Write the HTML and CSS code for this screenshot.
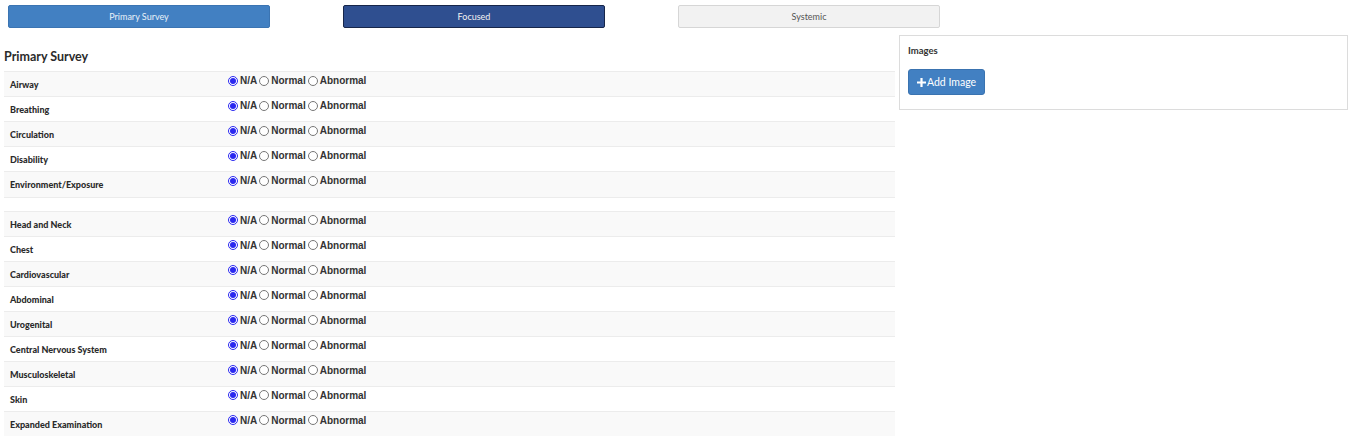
FILE: index.html
```html
<!DOCTYPE html>
<html>
  <head>
    <meta charset="utf-8">
    <title>Examination</title>
    <link rel="stylesheet" href="styles.css">
  </head>
  <body>
    <!-- exam type tabs -->
    <nav class="exam-tabs">
      <button class="tab tab-primary">Primary Survey</button>
      <button class="tab tab-focused">Focused</button>
      <button class="tab tab-systemic">Systemic</button>
    </nav>

    <div class="exam-layout">
      <main class="exam-main">
        <h2 class="section-title">Primary Survey</h2>

        <table class="exam-table">
          <tbody>
            <tr>
              <th>Airway</th>
              <td><div class="radio-group">
                <label><input type="radio" name="airway" checked>N/A</label>
                <label><input type="radio" name="airway">Normal</label>
                <label><input type="radio" name="airway">Abnormal</label>
              </div></td>
            </tr>
            <tr>
              <th>Breathing</th>
              <td><div class="radio-group">
                <label><input type="radio" name="breathing" checked>N/A</label>
                <label><input type="radio" name="breathing">Normal</label>
                <label><input type="radio" name="breathing">Abnormal</label>
              </div></td>
            </tr>
            <tr>
              <th>Circulation</th>
              <td><div class="radio-group">
                <label><input type="radio" name="circulation" checked>N/A</label>
                <label><input type="radio" name="circulation">Normal</label>
                <label><input type="radio" name="circulation">Abnormal</label>
              </div></td>
            </tr>
            <tr>
              <th>Disability</th>
              <td><div class="radio-group">
                <label><input type="radio" name="disability" checked>N/A</label>
                <label><input type="radio" name="disability">Normal</label>
                <label><input type="radio" name="disability">Abnormal</label>
              </div></td>
            </tr>
            <tr>
              <th>Environment/Exposure</th>
              <td><div class="radio-group">
                <label><input type="radio" name="environment" checked>N/A</label>
                <label><input type="radio" name="environment">Normal</label>
                <label><input type="radio" name="environment">Abnormal</label>
              </div></td>
            </tr>
          </tbody>
        </table>

        <div class="table-spacer"></div>

        <table class="exam-table">
          <tbody>
            <tr>
              <th>Head and Neck</th>
              <td><div class="radio-group">
                <label><input type="radio" name="head" checked>N/A</label>
                <label><input type="radio" name="head">Normal</label>
                <label><input type="radio" name="head">Abnormal</label>
              </div></td>
            </tr>
            <tr>
              <th>Chest</th>
              <td><div class="radio-group">
                <label><input type="radio" name="chest" checked>N/A</label>
                <label><input type="radio" name="chest">Normal</label>
                <label><input type="radio" name="chest">Abnormal</label>
              </div></td>
            </tr>
            <tr>
              <th>Cardiovascular</th>
              <td><div class="radio-group">
                <label><input type="radio" name="cardio" checked>N/A</label>
                <label><input type="radio" name="cardio">Normal</label>
                <label><input type="radio" name="cardio">Abnormal</label>
              </div></td>
            </tr>
            <tr>
              <th>Abdominal</th>
              <td><div class="radio-group">
                <label><input type="radio" name="abdominal" checked>N/A</label>
                <label><input type="radio" name="abdominal">Normal</label>
                <label><input type="radio" name="abdominal">Abnormal</label>
              </div></td>
            </tr>
            <tr>
              <th>Urogenital</th>
              <td><div class="radio-group">
                <label><input type="radio" name="urogenital" checked>N/A</label>
                <label><input type="radio" name="urogenital">Normal</label>
                <label><input type="radio" name="urogenital">Abnormal</label>
              </div></td>
            </tr>
            <tr>
              <th>Central Nervous System</th>
              <td><div class="radio-group">
                <label><input type="radio" name="cns" checked>N/A</label>
                <label><input type="radio" name="cns">Normal</label>
                <label><input type="radio" name="cns">Abnormal</label>
              </div></td>
            </tr>
            <tr>
              <th>Musculoskeletal</th>
              <td><div class="radio-group">
                <label><input type="radio" name="musculo" checked>N/A</label>
                <label><input type="radio" name="musculo">Normal</label>
                <label><input type="radio" name="musculo">Abnormal</label>
              </div></td>
            </tr>
            <tr>
              <th>Skin</th>
              <td><div class="radio-group">
                <label><input type="radio" name="skin" checked>N/A</label>
                <label><input type="radio" name="skin">Normal</label>
                <label><input type="radio" name="skin">Abnormal</label>
              </div></td>
            </tr>
            <tr>
              <th>Expanded Examination</th>
              <td><div class="radio-group">
                <label><input type="radio" name="expanded" checked>N/A</label>
                <label><input type="radio" name="expanded">Normal</label>
                <label><input type="radio" name="expanded">Abnormal</label>
              </div></td>
            </tr>
          </tbody>
        </table>
      </main>

      <!-- images panel -->
      <aside class="images-panel">
        <h3>Images</h3>
        <button class="add-image">
          <svg class="plus-icon" width="9" height="9" viewBox="0 0 9 9">
            <path d="M3.4 0h2.2v3.4H9v2.2H5.6V9H3.4V5.6H0V3.4h3.4z" fill="#fff"/>
          </svg>Add Image
        </button>
      </aside>
    </div>
  </body>
</html>
```

FILE: styles.css
```css
/* Reset / Global */
* {
  box-sizing: border-box;
}

body {
  margin: 0;
  font-family: Lato, "Open Sans", sans-serif;
  color: #333;
  background-color: #FFFFFF;
}

/* Tabs => three buttons across the top */
.exam-tabs {
  display: flex;
  gap: 73px;
  padding: 5px 0 0 8px;
}
.tab {
  width: 262px;
  height: 23px;
  border-radius: 2px;
  font-family: Lato, sans-serif;
  font-size: 9px;
  cursor: pointer;
}
.tab-primary {
  background-color: #4280c2;
  border: 1px solid #3b74b2;
  color: #e8f0f8;
}
.tab-focused {
  background-color: #2f4f90;
  border: 1px solid #17264a;
  color: #f2f2f2;
}
.tab-systemic {
  background-color: #f2f2f2;
  border: 1px solid #d6d6d6;
  color: #555;
}

/* Layout => table on the left, images on the right */
.exam-layout {
  display: flex;
  gap: 4px;
  padding: 7px 3px 0 4px;
}
.exam-main {
  width: 891px;
}

.section-title {
  margin: 14px 0 0 0;
  height: 22px;
  font-size: 12.5px;
  line-height: 15px;
  font-weight: bold;
  color: #2b2b2b;
}

/* Table => striped rows */
.exam-table {
  width: 100%;
  border-collapse: collapse;
}
.exam-table tr {
  height: 25px;
  border-top: 1px solid #ececec;
}
.exam-table tr:nth-child(odd) {
  background-color: #f9f9f9;
}
.exam-table th {
  width: 224px;
  padding: 1px 6px 0 6px;
  text-align: left;
  font-size: 9px;
  font-weight: 900;
  color: #2b2b2b;
  vertical-align: middle;
}
.exam-table td {
  padding: 3px 0 0 0;
  vertical-align: top;
}

/* Radios => N/A, Normal, Abnormal in one line */
.radio-group {
  display: flex;
  gap: 2px;
  font-family: "Liberation Sans", Arial, sans-serif;
  font-size: 10px;
  font-weight: bold;
  color: #333;
}
.radio-group label {
  display: flex;
  align-items: center;
  gap: 2px;
}
.radio-group input[type="radio"] {
  width: 10px;
  height: 10px;
  margin: 0;
  accent-color: #2a28f0;
}

.table-spacer {
  height: 14px;
  border-top: 1px solid #ececec;
}

/* Images panel */
.images-panel {
  flex: 1;
  align-self: flex-start;
  height: 75px;
  border: 1px solid #dcdcdc;
  padding: 9px 8px;
}
.images-panel h3 {
  margin: 0 0 13px 0;
  font-size: 9.5px;
  font-weight: bold;
  color: #333;
}
.add-image {
  display: inline-flex;
  align-items: center;
  gap: 1px;
  height: 26px;
  padding: 0 8px;
  border: 1px solid #3a73b0;
  border-radius: 3px;
  background-color: #4280c2;
  color: #FFFFFF;
  font-family: Lato, sans-serif;
  font-size: 10.5px;
  cursor: pointer;
}
```
